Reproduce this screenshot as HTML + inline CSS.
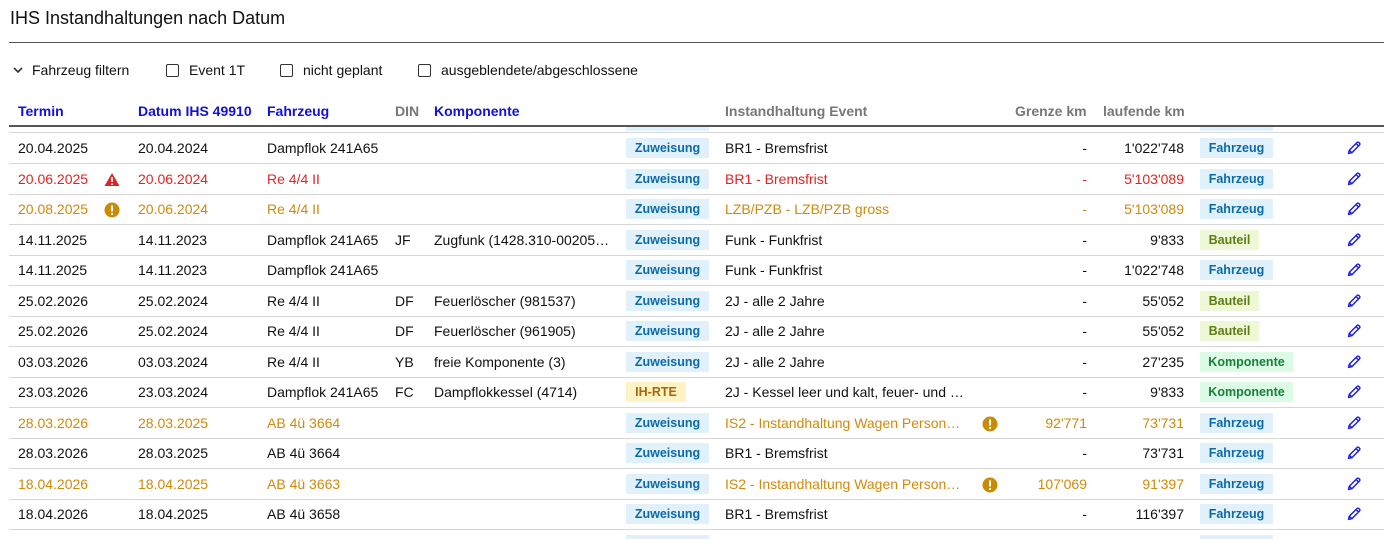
<!DOCTYPE html>
<html style="overflow:hidden;height:539px"><head><meta charset="utf-8"><style>
body{margin:0;width:1393px;height:539px;overflow:hidden;background:#fff;font-family:"Liberation Sans",Arial,sans-serif;font-size:14px;color:#111;position:relative}
.a{position:absolute;white-space:nowrap}
h1{position:absolute;left:10px;top:8px;margin:0;font-size:18px;font-weight:normal;color:#111}
.hr{position:absolute;left:9px;width:1375px;height:1px;background:#555}
.cb{display:inline-block;width:11px;height:11px;border:1.5px solid #333;border-radius:2px;vertical-align:-2px;margin-right:10px}
.hd{position:absolute;top:103px;font-weight:bold;font-size:14px;color:#1010e0}
.g{color:#777}
.row{position:absolute;left:9px;width:1375px;height:30px;border-bottom:1px solid #d6d6d6}
.row>div{position:absolute;top:0;line-height:30px;white-space:nowrap}
.c1{left:9px}.c2{left:129px}.c3{left:258px}.c4{left:386px}.c5{left:425px;width:180px;overflow:hidden;text-overflow:ellipsis}
.c6{left:716px;width:240px;overflow:hidden;text-overflow:ellipsis}
.c7{left:990px;width:88px;text-align:right}.c8{left:1090px;width:85px;text-align:right}
.bd{top:5px!important;height:20px;line-height:20px!important;font-size:12.5px;font-weight:bold;text-align:center}
.z{left:617px;width:83px;background:#e0f1fc;color:#0b6aa8}
.ih{left:617px;width:60px;background:#fdf3c4;color:#a8650a}
.f{left:1191px;width:73px;background:#e0f1fc;color:#0b6aa8}
.bt{left:1191px;width:59px;background:#eef8d6;color:#5f7d12}
.k{left:1191px;width:93px;background:#dcfbe5;color:#17803d}
.p{left:1337px;top:7px!important;line-height:0!important}
.w{left:95px;top:8px!important;line-height:0!important}
.w2{left:973px;top:8px!important;line-height:0!important}
.r>div{color:#e02424}.o>div{color:#d08a0a}
.r .bd,.o .bd{color:#0b6aa8}
</style></head><body>
<svg width="0" height="0" style="position:absolute"><defs><symbol id="pen" viewBox="0 0 16 16"><path d="M2.5 13.5L3.3 10.2L11 2.5Q12 1.6 13 2.6L13.4 3Q14.4 4 13.5 5L5.8 12.7Z M10 3.5L12.5 6 M3.3 10.2L5.8 12.7" stroke="#1a1ae6" stroke-width="1.4" fill="none" stroke-linejoin="round"/></symbol></defs></svg>
<h1>IHS Instandhaltungen nach Datum</h1>
<div class="hr" style="top:42px"></div>
<div class="a" style="left:12px;top:62px;font-size:14px">
<svg width="12" height="10" style="vertical-align:0px;margin-right:8px"><path d="M2 3l4 4 4-4" stroke="#333" stroke-width="1.6" fill="none"/></svg>Fahrzeug filtern</div>
<div class="a" style="left:166px;top:62px"><span class="cb"></span>Event 1T</div>
<div class="a" style="left:280px;top:62px"><span class="cb"></span>nicht geplant</div>
<div class="a" style="left:418px;top:62px"><span class="cb"></span>ausgeblendete/abgeschlossene</div>
<div class="hd" style="left:18px">Termin</div>
<div class="hd" style="left:138px">Datum IHS 49910</div>
<div class="hd" style="left:267px">Fahrzeug</div>
<div class="hd g" style="left:395px">DIN</div>
<div class="hd" style="left:434px">Komponente</div>
<div class="hd g" style="left:725px">Instandhaltung Event</div>
<div class="hd g" style="left:1015px">Grenze km</div>
<div class="hd g" style="left:1103px">laufende km</div>
<div class="hr" style="top:125px;height:1.5px"></div>
<div class="a" style="left:626px;top:127px;width:83px;height:4px;background:#e0f1fc"></div>
<div class="a" style="left:1200px;top:127px;width:73px;height:4px;background:#e0f1fc"></div>
<div class="a" style="left:9px;top:132px;width:1375px;height:1px;background:#d6d6d6"></div>

<div class="row" style="top:133px"><div class="c1">20.04.2025</div><div class="c2">20.04.2024</div><div class="c3">Dampflok 241A65</div><div class="bd z">Zuweisung</div><div class="c6">BR1 - Bremsfrist</div><div class="c7">-</div><div class="c8">1'022'748</div><div class="bd f">Fahrzeug</div><div class="p"><svg width="16" height="16"><use href="#pen"/></svg></div></div>
<div class="row r" style="top:163.5px"><div class="c1">20.06.2025</div><div class="w"><svg width="16" height="15"><path d="M8 1L15.5 14H.5z" fill="#dc2626"/><path d="M8 5v5M8 11.5v1.5" stroke="#fff" stroke-width="1.8"/></svg></div><div class="c2">20.06.2024</div><div class="c3">Re 4/4 II</div><div class="bd z">Zuweisung</div><div class="c6">BR1 - Bremsfrist</div><div class="c7">-</div><div class="c8">5'103'089</div><div class="bd f">Fahrzeug</div><div class="p"><svg width="16" height="16"><use href="#pen"/></svg></div></div>
<div class="row o" style="top:194px"><div class="c1">20.08.2025</div><div class="w"><svg width="16" height="16"><circle cx="8" cy="8" r="7.5" fill="#ca8a04"/><path d="M8 3.5v6M8 11v2" stroke="#fff" stroke-width="2"/></svg></div><div class="c2">20.06.2024</div><div class="c3">Re 4/4 II</div><div class="bd z">Zuweisung</div><div class="c6">LZB/PZB - LZB/PZB gross</div><div class="c7">-</div><div class="c8">5'103'089</div><div class="bd f">Fahrzeug</div><div class="p"><svg width="16" height="16"><use href="#pen"/></svg></div></div>
<div class="row" style="top:224.5px"><div class="c1">14.11.2025</div><div class="c2">14.11.2023</div><div class="c3">Dampflok 241A65</div><div class="c4">JF</div><div class="c5">Zugfunk (1428.310-00205…</div><div class="bd z">Zuweisung</div><div class="c6">Funk - Funkfrist</div><div class="c7">-</div><div class="c8">9'833</div><div class="bd bt">Bauteil</div><div class="p"><svg width="16" height="16"><use href="#pen"/></svg></div></div>
<div class="row" style="top:255px"><div class="c1">14.11.2025</div><div class="c2">14.11.2023</div><div class="c3">Dampflok 241A65</div><div class="bd z">Zuweisung</div><div class="c6">Funk - Funkfrist</div><div class="c7">-</div><div class="c8">1'022'748</div><div class="bd f">Fahrzeug</div><div class="p"><svg width="16" height="16"><use href="#pen"/></svg></div></div>
<div class="row" style="top:285.5px"><div class="c1">25.02.2026</div><div class="c2">25.02.2024</div><div class="c3">Re 4/4 II</div><div class="c4">DF</div><div class="c5">Feuerlöscher (981537)</div><div class="bd z">Zuweisung</div><div class="c6">2J - alle 2 Jahre</div><div class="c7">-</div><div class="c8">55'052</div><div class="bd bt">Bauteil</div><div class="p"><svg width="16" height="16"><use href="#pen"/></svg></div></div>
<div class="row" style="top:316px"><div class="c1">25.02.2026</div><div class="c2">25.02.2024</div><div class="c3">Re 4/4 II</div><div class="c4">DF</div><div class="c5">Feuerlöscher (961905)</div><div class="bd z">Zuweisung</div><div class="c6">2J - alle 2 Jahre</div><div class="c7">-</div><div class="c8">55'052</div><div class="bd bt">Bauteil</div><div class="p"><svg width="16" height="16"><use href="#pen"/></svg></div></div>
<div class="row" style="top:346.5px"><div class="c1">03.03.2026</div><div class="c2">03.03.2024</div><div class="c3">Re 4/4 II</div><div class="c4">YB</div><div class="c5">freie Komponente (3)</div><div class="bd z">Zuweisung</div><div class="c6">2J - alle 2 Jahre</div><div class="c7">-</div><div class="c8">27'235</div><div class="bd k">Komponente</div><div class="p"><svg width="16" height="16"><use href="#pen"/></svg></div></div>
<div class="row" style="top:377px"><div class="c1">23.03.2026</div><div class="c2">23.03.2024</div><div class="c3">Dampflok 241A65</div><div class="c4">FC</div><div class="c5">Dampflokkessel (4714)</div><div class="bd ih">IH-RTE</div><div class="c6">2J - Kessel leer und kalt, feuer- und …</div><div class="c7">-</div><div class="c8">9'833</div><div class="bd k">Komponente</div><div class="p"><svg width="16" height="16"><use href="#pen"/></svg></div></div>
<div class="row o" style="top:407.5px"><div class="c1">28.03.2026</div><div class="c2">28.03.2025</div><div class="c3">AB 4ü 3664</div><div class="bd z">Zuweisung</div><div class="c6">IS2 - Instandhaltung Wagen Person…</div><div class="w2"><svg width="16" height="16"><circle cx="8" cy="8" r="7.5" fill="#ca8a04"/><path d="M8 3.5v6M8 11v2" stroke="#fff" stroke-width="2"/></svg></div><div class="c7">92'771</div><div class="c8">73'731</div><div class="bd f">Fahrzeug</div><div class="p"><svg width="16" height="16"><use href="#pen"/></svg></div></div>
<div class="row" style="top:438px"><div class="c1">28.03.2026</div><div class="c2">28.03.2025</div><div class="c3">AB 4ü 3664</div><div class="bd z">Zuweisung</div><div class="c6">BR1 - Bremsfrist</div><div class="c7">-</div><div class="c8">73'731</div><div class="bd f">Fahrzeug</div><div class="p"><svg width="16" height="16"><use href="#pen"/></svg></div></div>
<div class="row o" style="top:468.5px"><div class="c1">18.04.2026</div><div class="c2">18.04.2025</div><div class="c3">AB 4ü 3663</div><div class="bd z">Zuweisung</div><div class="c6">IS2 - Instandhaltung Wagen Person…</div><div class="w2"><svg width="16" height="16"><circle cx="8" cy="8" r="7.5" fill="#ca8a04"/><path d="M8 3.5v6M8 11v2" stroke="#fff" stroke-width="2"/></svg></div><div class="c7">107'069</div><div class="c8">91'397</div><div class="bd f">Fahrzeug</div><div class="p"><svg width="16" height="16"><use href="#pen"/></svg></div></div>
<div class="row" style="top:499px"><div class="c1">18.04.2026</div><div class="c2">18.04.2025</div><div class="c3">AB 4ü 3658</div><div class="bd z">Zuweisung</div><div class="c6">BR1 - Bremsfrist</div><div class="c7">-</div><div class="c8">116'397</div><div class="bd f">Fahrzeug</div><div class="p"><svg width="16" height="16"><use href="#pen"/></svg></div></div>
<div class="a" style="left:626px;top:535px;width:83px;height:4px;background:#e0f1fc"></div>
<div class="a" style="left:1200px;top:535px;width:73px;height:4px;background:#e0f1fc"></div>
</body></html>
